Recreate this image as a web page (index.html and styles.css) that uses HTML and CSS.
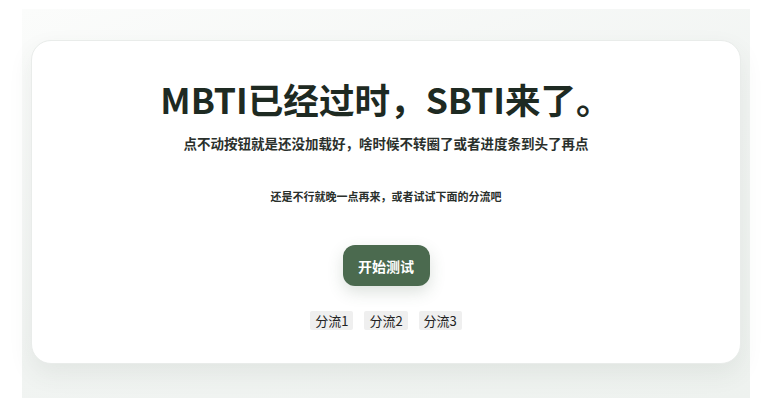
FILE: index.html
```html
<!DOCTYPE html>
<html lang="zh-CN">
<head>
<meta charset="utf-8">
<link rel="stylesheet" href="styles.css">
</head>
<body>
<div class="stage">
  <div class="card">
    <h1 class="title">MBTI已经过时，SBTI来了。</h1>
    <p class="hint">点不动按钮就是还没加载好，啥时候不转圈了或者进度条到头了再点</p>
    <p class="note">还是不行就晚一点再来，或者试试下面的分流吧</p>
    <button class="start">开始测试</button>
    <div class="mirrors">
      <a class="mirror">分流1</a>
      <a class="mirror">分流2</a>
      <a class="mirror">分流3</a>
    </div>
  </div>
</div>
</body>
</html>
```
FILE: styles.css
```css
html, body {
  margin: 0;
  padding: 0;
  background: #ffffff;
}
body {
  width: 770px;
  height: 417px;
  overflow: hidden;
  font-family: "Noto Sans CJK SC", "Noto Sans", sans-serif;
}
.stage {
  margin: 9px 0 0 22px;
  width: 728px;
  height: 389px;
  box-sizing: border-box;
  padding: 31px 9px 0 9px;
  background: linear-gradient(160deg, #fbfcfb 0%, #f1f4f2 55%, #eef2ef 100%);
}
.card {
  height: 324px;
  box-sizing: border-box;
  background: #ffffff;
  border-radius: 20px;
  border: 1px solid #e9ecea;
  box-shadow: 0 10px 24px rgba(60, 80, 65, 0.08);
  display: flex;
  flex-direction: column;
  align-items: center;
  padding-top: 34px;
}
.title {
  margin: 0;
  font-size: 35.6px;
  line-height: 48px;
  font-weight: 700;
  color: #1e2a22;
  letter-spacing: 0;
}
.hint {
  margin: 10px 0 0 0;
  font-size: 13.5px;
  line-height: 20px;
  font-weight: 700;
  color: #2a302c;
}
.note {
  margin: 35px 0 0 0;
  font-size: 11px;
  line-height: 16px;
  font-weight: 700;
  color: #2a302c;
}
.start {
  margin-top: 41px;
  width: 87px;
  height: 41px;
  border: none;
  border-radius: 12px;
  background: #4b6a4f;
  color: #ffffff;
  font-family: "Noto Sans CJK SC", sans-serif;
  font-size: 14px;
  font-weight: 700;
  box-shadow: 0 6px 16px rgba(60, 90, 65, 0.18);
}
.mirrors {
  margin-top: 25px;
  display: flex;
  gap: 11px;
}
.mirror {
  display: block;
  padding: 0 5px;
  height: 19px;
  line-height: 19px;
  font-size: 13px;
  color: #222;
  background: #efefef;
  border-radius: 2px;
}
```
